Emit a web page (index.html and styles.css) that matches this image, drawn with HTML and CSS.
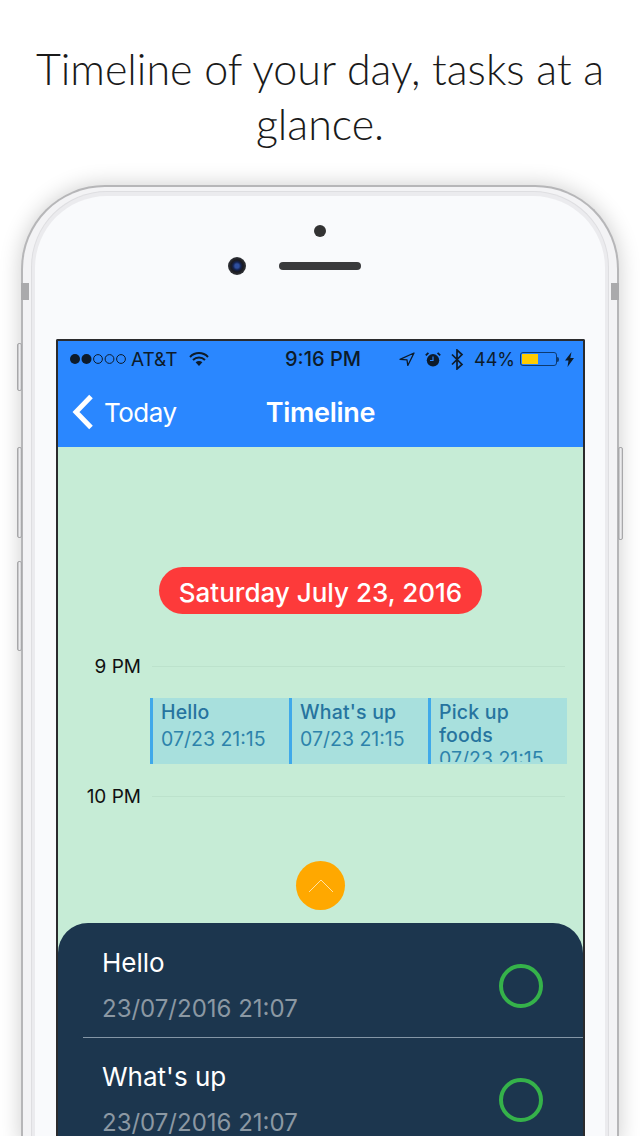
FILE: index.html
```html
<!DOCTYPE html>
<html lang="en">
<head>
<meta charset="utf-8">
<title>Timeline</title>
<link rel="stylesheet" href="styles.css">
</head>
<body>
<h1 class="headline">Timeline of your day, tasks at a glance.</h1>
<div class="phone">
  <span class="btn btn-mute"></span>
  <span class="btn btn-up"></span>
  <span class="btn btn-down"></span>
  <span class="btn btn-power"></span>
  <span class="band band-l"></span>
  <span class="band band-r"></span>
  <div class="midrim">
    <div class="bezel">
      <div class="sensors">
        <span class="prox"></span>
        <div class="ear">
          <span class="camera"></span>
          <span class="speaker"></span>
          <span></span>
        </div>
      </div>
      <div class="screen">
        <header class="header">
          <div class="status">
            <div class="st-left">
              <svg class="signal" width="56" height="12" viewBox="0 0 56 12"><circle cx="5" cy="6" r="5" fill="#0d1b2a"/><circle cx="16.500" cy="6" r="5" fill="#0d1b2a"/><circle cx="28" cy="6" r="4.400" fill="none" stroke="#0d1b2a" stroke-width="1"/><circle cx="39.500" cy="6" r="4.400" fill="none" stroke="#0d1b2a" stroke-width="1"/><circle cx="51" cy="6" r="4.400" fill="none" stroke="#0d1b2a" stroke-width="1"/></svg>
              <span class="carrier">AT&amp;T</span>
              <svg class="wifi" width="20" height="14" viewBox="0 0 20 14"><path d="M1 5C6-.2 14-.2 19 5M4 8c3.400-3.300 8.600-3.300 12 0" fill="none" stroke="#0d1b2a" stroke-width="2"/><path d="M6.600 10.300c2-1.700 4.800-1.700 6.800 0L10 14z" fill="#0d1b2a"/></svg>
            </div>
            <span class="clock">9:16 PM</span>
            <div class="st-right">
              <svg width="16" height="14" viewBox="0 0 16 14"><path d="M15 1L1 7.300l7 .6.800 5.600z" fill="none" stroke="#0d1b2a" stroke-width="1.300" stroke-linejoin="round"/></svg>
              <svg class="alarm" width="16" height="15" viewBox="0 0 16 15"><circle cx="8" cy="8.300" r="6.200" fill="#0d1b2a"/><path d="M8 4.500v4H5" fill="none" stroke="#2a87ff" stroke-width="1.200"/><path d="M.8 3.400L3.400.8M15.200 3.400L12.600.8" stroke="#0d1b2a" stroke-width="1.800"/></svg>
              <svg class="bt" width="13" height="21" viewBox="0 0 13 21"><path d="M1 5.500l10 10-5 4.500V1l5 4.500-10 10" fill="none" stroke="#0d1b2a" stroke-width="1.700"/></svg>
              <span class="pct">44%</span>
              <div class="battery"><span class="cell"><span class="charge"></span></span><span class="tip"></span></div>
              <svg class="bolt" width="9" height="15" viewBox="0 0 9 15"><path d="M6.500 0L0 8.500h3.500L2.500 15 9 6H5.300z" fill="#0d1b2a"/></svg>
            </div>
          </div>
          <nav class="nav">
            <div class="back">
              <svg width="22" height="36" viewBox="0 0 22 36"><path d="M19 2.500L4 18l15 15.500" fill="none" stroke="#fff" stroke-width="5"/></svg>
              <span>Today</span>
            </div>
            <span class="title">Timeline</span>
            <span></span>
          </nav>
        </header>
        <main class="content">
          <div class="date">Saturday July 23, 2016</div>
          <div class="hour"><span class="hour-label">9 PM</span><span class="hour-line"></span></div>
          <div class="events">
            <div class="event"><div class="event-body"><b>Hello</b><span>07/23 21:15</span></div></div>
            <div class="event"><div class="event-body"><b>What's up</b><span>07/23 21:15</span></div></div>
            <div class="event"><div class="event-body"><b>Pick up foods</b><span>07/23 21:15</span></div></div>
          </div>
          <div class="hour hour-next"><span class="hour-label">10 PM</span><span class="hour-line"></span></div>
          <div class="toggle">
            <svg width="26" height="14" viewBox="0 0 26 14"><path d="M1 13L13 1l12 12" fill="none" stroke="#ffe3a6" stroke-width="1"/></svg>
          </div>
          <section class="sheet">
            <div class="task">
              <div class="task-text"><div class="task-name">Hello</div><div class="task-date">23/07/2016 21:07</div></div>
              <span class="check"></span>
            </div>
            <div class="task">
              <div class="task-text"><div class="task-name">What's up</div><div class="task-date">23/07/2016 21:07</div></div>
              <span class="check"></span>
            </div>
          </section>
        </main>
      </div>
    </div>
  </div>
</div>
</body>
</html>
```
FILE: styles.css
```css
* { box-sizing: border-box; }
html, body { margin: 0; height: 1136px; overflow: hidden; background: #fff; }
body { font-family: Inter, "Liberation Sans", sans-serif; }

.headline {
  margin: 0 auto 34px;
  padding-top: 41px;
  width: 620px;
  font-family: Lato, sans-serif;
  font-weight: 300;
  font-size: 43px;
  line-height: 55px;
  text-align: center;
  color: #1a1a1a;
}

.phone {
  position: relative;
  width: 598px;
  height: 960px;
  margin-left: 21px;
  padding: 4px 8px 0;
  background: #f3f3f5;
  border: 2px solid #b6b6b8;
  border-bottom: 0;
  border-radius: 84px 84px 0 0;
  box-shadow: 0 0 22px rgba(0, 0, 0, .2);
}
.band { position: absolute; top: 96px; width: 8px; height: 17px; background: #aaaaac; }
.band-l { left: -2px; }
.band-r { right: -2px; }
.btn {
  position: absolute;
  width: 5px;
  background: linear-gradient(90deg, #b8b8ba, #f6f6f8 60%, #c4c4c6);
  border: 1px solid #a8a8aa;
  border-radius: 2px;
}
.btn-mute { left: -6px; top: 156px; height: 48px; }
.btn-up { left: -6px; top: 260px; height: 91px; }
.btn-down { left: -6px; top: 374px; height: 90px; }
.btn-power { right: -6px; top: 260px; height: 93px; }

.midrim {
  height: 100%;
  padding: 4px 3px 0;
  background: #ebebee;
  border: 1px solid #dedee1;
  border-bottom: 0;
  border-radius: 76px 76px 0 0;
}
.bezel {
  height: 100%;
  padding: 0 20px 0 21px;
  background: #f9fafc;
  border-radius: 72px 72px 0 0;
}
.sensors {
  height: 143px;
  margin-right: 1px;
  padding-top: 29px;
  display: flex;
  flex-direction: column;
  align-items: center;
}
.prox { width: 12px; height: 12px; border-radius: 50%; background: #333; }
.ear {
  margin-top: 20px;
  width: 100%;
  display: grid;
  grid-template-columns: 1fr 82px 1fr;
  column-gap: 33px;
  align-items: center;
}
.camera {
  justify-self: end;
  width: 18px;
  height: 18px;
  border-radius: 50%;
  background: radial-gradient(circle, #2f4f9e 0 2px, #14224e 4px, #1a1a20 6px, #33353a 9px);
}
.speaker { height: 8px; border-radius: 4px; background: #3a3a3c; }

.screen {
  height: 820px;
  overflow: hidden;
  border: 2px solid #2b2b2d;
  border-bottom: 0;
  border-radius: 2px 2px 0 0;
  background: #c6ecd6;
}

.header { height: 106px; background: #2a87ff; }
.status {
  height: 36px;
  padding: 0 9px 0 12px;
  display: grid;
  grid-template-columns: minmax(0, 1fr) auto minmax(0, 1fr);
  align-items: center;
  color: #0d1b2a;
  font-size: 18px;
}
.st-left, .st-right { display: flex; align-items: center; }
.st-right { justify-content: flex-end; }
.carrier { margin-left: 5px; font-size: 19px; }
.wifi { margin-left: 11px; }
.clock { margin-left: 2px; font-weight: 500; font-size: 20px; }
.alarm { margin-left: 10px; }
.bt { margin-left: 10px; }
.pct { margin-left: 10px; }
.battery { margin-left: 5px; display: flex; align-items: center; }
.cell {
  display: block;
  width: 37px;
  height: 14px;
  padding: 1px;
  border: 1px solid #0d3a70;
  border-radius: 3px;
}
.charge { display: block; width: 16px; height: 100%; background: #ffcc00; }
.tip { width: 2px; height: 5px; background: #0d3a70; border-radius: 0 2px 2px 0; }
.bolt { margin-left: 6px; }

.nav {
  height: 70px;
  display: grid;
  grid-template-columns: minmax(0, 1fr) auto minmax(0, 1fr);
  align-items: center;
  color: #fff;
}
.back { margin-left: 14px; display: flex; align-items: center; gap: 10px; font-size: 26px; letter-spacing: -.5px; }
.title { font-weight: 600; font-size: 27px; letter-spacing: -.3px; }

.content { display: flow-root; }
.date {
  width: 323px;
  height: 47px;
  margin: 120px 0 40px 101px;
  border-radius: 24px;
  background: #fd3a3a;
  color: #fff;
  font-weight: 500;
  font-size: 26px;
  line-height: 51px;
  text-align: center;
}
.hour {
  height: 24px;
  padding: 0 18px 0 0;
  display: flex;
  align-items: center;
}
.hour-next { margin-top: 20px; }
.hour-label {
  width: 83px;
  text-align: right;
  font-size: 19px;
  color: #111;
}
.hour-line { flex: 1; height: 1px; margin-left: 11px; background: #bce2cc; }
.events {
  height: 66px;
  margin: 20px 16px 0 92px;
  display: grid;
  grid-template-columns: repeat(3, 1fr);
  background: #a8e0dd;
}
.event {
  height: 66px;
  padding: 0 4px 0 8px;
  border-left: 3px solid #3fa9ea;
  color: #2d83ab;
  font-size: 19.500px;
  line-height: 24px;
}
.event-body { height: 64px; overflow: hidden; padding-top: 3px; }
.event b { display: block; font-weight: 500; letter-spacing: .2px; color: #26749f; line-height: 23px; }
.event span { display: block; padding-top: 3px; }
.event:last-child span { padding-top: 0; }

.toggle {
  width: 49px;
  height: 49px;
  margin: 53px 0 13px 238px;
  border-radius: 50%;
  background: #ffa800;
  display: flex;
  align-items: center;
  justify-content: center;
}

.sheet {
  height: 300px;
  border-radius: 30px 30px 0 0;
  background: #1c364e;
}
.task {
  height: 114px;
  margin-left: 25px;
  padding: 11px 40px 0 19px;
  display: flex;
  align-items: center;
  justify-content: space-between;
}
.task + .task { border-top: 1px solid #8496a6; }
.task-name { color: #fff; font-size: 26px; line-height: 32px; }
.task-date { margin-top: 14px; color: #8b98a3; font-size: 24px; line-height: 32px; }
.check {
  width: 44px;
  height: 44px;
  border: 4px solid #35b24a;
  border-radius: 50%;
}
```
